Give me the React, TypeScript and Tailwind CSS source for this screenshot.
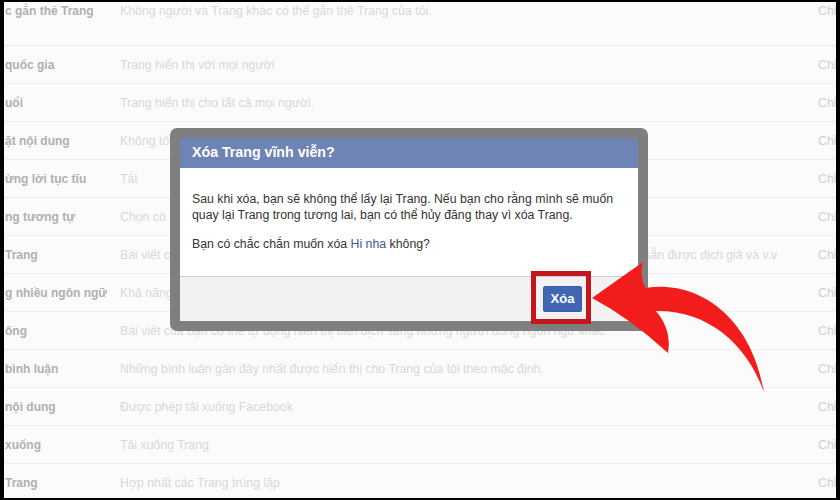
import React from 'react';

type Row = { label: string; desc: string };

// faded settings rows behind the dialog
const ROWS: Row[] = [
  { label: 'c gắn thẻ Trang', desc: 'Không người và Trang khác có thể gắn thẻ Trang của tôi.' },
  { label: 'quốc gia', desc: 'Trang hiển thị với mọi người' },
  { label: 'uổi', desc: 'Trang hiển thị cho tất cả mọi người.' },
  { label: 'ặt nội dung', desc: 'Không tốt' },
  { label: 'ừng lời tục tĩu', desc: 'Tắt' },
  { label: 'ng tương tự', desc: 'Chọn có hiển thị Trang tương tự hay không' },
  {
    label: 'Trang',
    desc: 'Bài viết của Trang có thể hiển thị bằng nhiều ngôn ngữ khác cho mọi người xem, cùng bản dịch sẵn được dịch giả và v.v',
  },
  { label: 'g nhiều ngôn ngữ', desc: 'Khả năng đăng bài bằng nhiều ngôn ngữ đã tắt' },
  {
    label: 'ông',
    desc: 'Bài viết của bạn có thể tự động hiển thị bản dịch sang những người dùng ngôn ngữ khác',
  },
  { label: 'bình luận', desc: 'Những bình luận gần đây nhất được hiển thị cho Trang của tôi theo mặc định.' },
  { label: 'nội dung', desc: 'Được phép tải xuống Facebook' },
  { label: 'xuống', desc: 'Tải xuống Trang' },
  { label: 'Trang', desc: 'Hợp nhất các Trang trùng lặp' },
];

function SettingRow({ row, first }: { row: Row; first: boolean }) {
  return (
    <div
      className={
        first
          ? 'flex items-start h-[43px] pt-[1px] leading-[16px]'
          : 'flex items-center h-[38px] border-t border-[#eeeeee] leading-[16px]'
      }
    >
      <div className="w-[116px] shrink-0 pl-[1px] text-[12px] font-bold text-[#b0b0b0] whitespace-nowrap overflow-hidden">
        {row.label}
      </div>
      <div className="w-[698px] shrink-0 text-[12.3px] text-[#d8d8d8] whitespace-nowrap overflow-hidden">
        {row.desc}
      </div>
      <div className="shrink-0 text-[12.3px] text-[#d0d0d0] whitespace-nowrap">Chỉnh sửa</div>
    </div>
  );
}

function DeleteDialog() {
  return (
    <div className="absolute left-[170px] top-[128px] w-[478px] h-[203px] rounded-[7px] bg-[#7f7f7f] p-[10px]">
      <div className="flex flex-col h-full bg-white">
        {/* Header */}
        <div className="h-[30px] shrink-0 flex items-center pl-[12px] bg-[#6d84b4] text-white text-[14.2px] font-bold">
          Xóa Trang vĩnh viễn?
        </div>
        {/* Body */}
        <div className="h-[108px] shrink-0 px-[12px] pt-[23px] text-[12.3px] leading-[16px] text-[#333333]">
          <p className="whitespace-nowrap">
            Sau khi xóa, bạn sẽ không thể lấy lại Trang. Nếu bạn cho rằng mình sẽ muốn
            <br />
            quay lại Trang trong tương lai, bạn có thể hủy đăng thay vì xóa Trang.
          </p>
          <p className="mt-[13px]">
            Bạn có chắc chắn muốn xóa <span className="text-[#3b5998]">Hi nha</span> không?
          </p>
        </div>
        {/* Footer */}
        <div className="flex-1 flex items-center justify-end pr-[56px] bg-[#f2f2f2] border-t border-[#cccccc]">
          <button className="w-[39px] h-[26px] rounded-[2px] bg-[#4267b2] border border-[#3b5ea8] text-white text-[13px] font-bold">
            Xóa
          </button>
        </div>
      </div>
    </div>
  );
}

function CurvedArrow() {
  return (
    <svg className="absolute left-0 top-0" width="840" height="500" viewBox="0 0 840 500">
      <path
        d="M592 298 L643 262 Q639 278 646 288 C694 280 750 312 764 392 C746 342 706 310 656 311 Q672 330 668 353 Q630 318 592 298 Z"
        fill="#f21c1c"
      />
    </svg>
  );
}

export default function App() {
  return (
    <div
      className="relative w-[840px] h-[500px] bg-black pt-[2px] pb-[2px] pl-[4px] pr-[4px] overflow-hidden"
      style={{ fontFamily: '"Liberation Sans", Arial, sans-serif' }}
    >
      <div className="w-[832px] h-full bg-[#fbfbfb] overflow-hidden">
        {ROWS.map((row, i) => (
          <SettingRow key={i} row={row} first={i === 0} />
        ))}
      </div>

      <DeleteDialog />

      {/* highlight around the delete button */}
      <div className="absolute left-[531px] top-[271px] w-[60px] h-[53px] border-[5px] border-[#c4161c]" />

      <CurvedArrow />
    </div>
  );
}
